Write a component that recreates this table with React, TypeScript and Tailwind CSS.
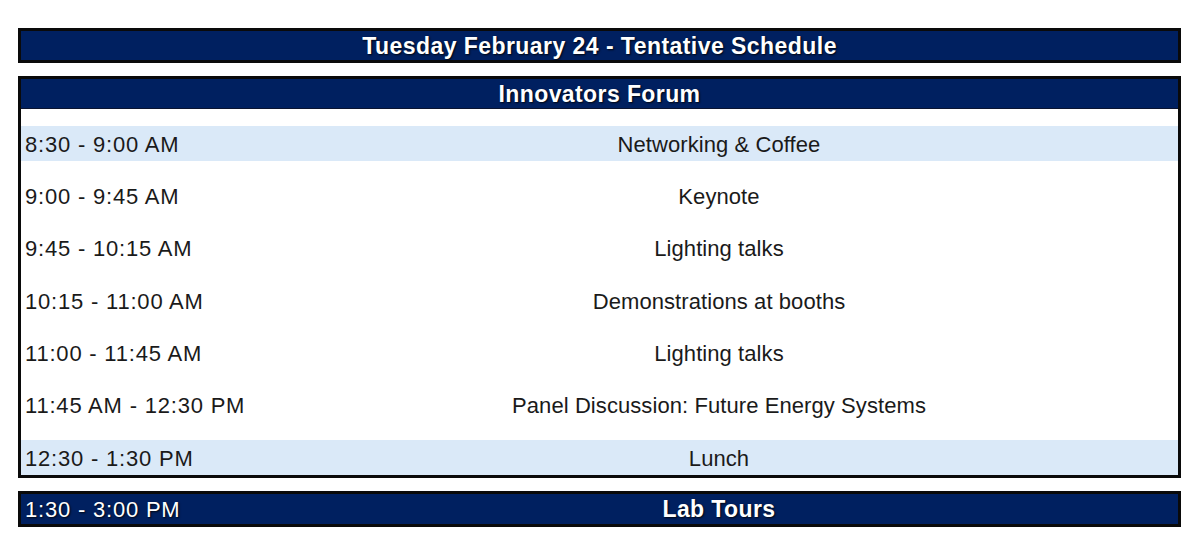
import React from "react";

const rows: { time: string; event: string; shaded: boolean }[] = [
  { time: "8:30 - 9:00 AM", event: "Networking & Coffee", shaded: true },
  { time: "9:00 - 9:45 AM", event: "Keynote", shaded: false },
  { time: "9:45 - 10:15 AM", event: "Lighting talks", shaded: false },
  { time: "10:15 - 11:00 AM", event: "Demonstrations at booths", shaded: false },
  { time: "11:00 - 11:45 AM", event: "Lighting talks", shaded: false },
  { time: "11:45 AM - 12:30 PM", event: "Panel Discussion: Future Energy Systems", shaded: false },
  { time: "12:30 - 1:30 PM", event: "Lunch", shaded: true },
];

export default function App() {
  return (
    <div
      className="w-[1200px] h-[556px] bg-white overflow-hidden pt-[28px]"
      style={{ fontFamily: '"Liberation Sans", Arial, sans-serif' }}
    >
      <div className="ml-[18px] w-[1163px] flex flex-col">
        {/* Title bar */}
        <div className="h-[35px] border-[3px] border-[#0a0a0a] bg-[#002060] flex items-center justify-center">
          <span className="text-white font-bold text-[23px] tracking-[0.45px] leading-none pt-[1px] [text-shadow:1px_1px_2px_rgba(0,0,0,0.85)]">
            Tuesday February 24 - Tentative Schedule
          </span>
        </div>

        {/* Innovators Forum box */}
        <div className="mt-[13px] border-[3px] border-[#0a0a0a] bg-white flex flex-col">
          <div className="h-[30px] bg-[#002060] border-b border-[#0b1430] flex items-center justify-center">
            <span className="text-white font-bold text-[23px] tracking-[0.4px] leading-none pt-[1px] [text-shadow:1px_1px_2px_rgba(0,0,0,0.85)]">
              Innovators Forum
            </span>
          </div>
          {rows.map((r, i) => (
            <div key={i} className="h-[52.33px] flex flex-col justify-end">
              <div
                className={`h-[35px] flex items-center text-[22px] text-[#1a1a1a] leading-none pt-[2px] ${
                  r.shaded ? "bg-[#dae9f8]" : "bg-white"
                }`}
              >
                <div className="w-[239px] pl-[4px] tracking-[0.8px] whitespace-nowrap">{r.time}</div>
                <div className="flex-1 text-center tracking-[0.08px] whitespace-nowrap">{r.event}</div>
              </div>
            </div>
          ))}
        </div>

        {/* Lab Tours bar */}
        <div className="mt-[13px] h-[36px] border-[3px] border-[#0a0a0a] bg-[#002060] flex items-center text-white leading-none pt-[1px]">
          <div className="w-[239px] pl-[4px] text-[22px] tracking-[0.8px] whitespace-nowrap [text-shadow:1px_1px_2px_rgba(0,0,0,0.85)]">
            1:30 - 3:00 PM
          </div>
          <div className="flex-1 text-center font-bold text-[23px] tracking-[0.4px] [text-shadow:1px_1px_2px_rgba(0,0,0,0.85)]">
            Lab Tours
          </div>
        </div>
      </div>
    </div>
  );
}
